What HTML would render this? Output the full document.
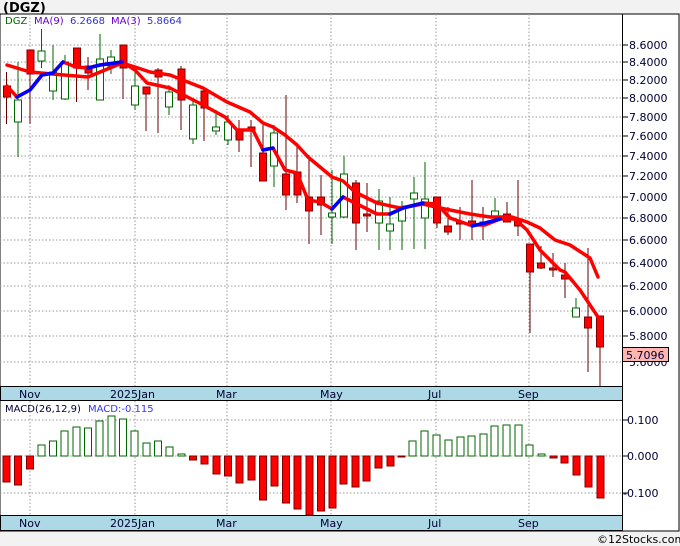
<!DOCTYPE html>
<html><head><style>
html,body{margin:0;padding:0;background:#f2f2f2;width:680px;height:546px;overflow:hidden}
svg{display:block;font-family:"DejaVu Sans","Liberation Sans",sans-serif}
</style></head><body>
<svg width="680" height="546" viewBox="0 0 680 546" xmlns="http://www.w3.org/2000/svg">
<rect x="0" y="0" width="680" height="546" fill="#f2f2f2"/>
<text x="3" y="12" font-size="13" font-weight="bold" fill="#000">(DGZ)</text>
<rect x="0" y="14" width="679" height="517" fill="#fff" stroke="#000" stroke-width="1"/>
<line x1="622.5" y1="14" x2="622.5" y2="531" stroke="#000"/>
<g stroke="#999" stroke-dasharray="1.5,2" stroke-width="1">
<line x1="0" x2="622" y1="45" y2="45"/><line x1="0" x2="622" y1="62" y2="62"/><line x1="0" x2="622" y1="80" y2="80"/><line x1="0" x2="622" y1="98" y2="98"/><line x1="0" x2="622" y1="117" y2="117"/><line x1="0" x2="622" y1="136" y2="136"/><line x1="0" x2="622" y1="156" y2="156"/><line x1="0" x2="622" y1="176" y2="176"/><line x1="0" x2="622" y1="197" y2="197"/><line x1="0" x2="622" y1="218" y2="218"/><line x1="0" x2="622" y1="240" y2="240"/><line x1="0" x2="622" y1="263" y2="263"/><line x1="0" x2="622" y1="286" y2="286"/><line x1="0" x2="622" y1="311" y2="311"/><line x1="0" x2="622" y1="336" y2="336"/><line x1="0" x2="622" y1="362" y2="362"/>
<line x1="0" x2="622" y1="420" y2="420"/><line x1="0" x2="622" y1="456" y2="456"/><line x1="0" x2="622" y1="493" y2="493"/>
<line x1="30" x2="30" y1="14" y2="386"/><line x1="135" x2="135" y1="14" y2="386"/><line x1="227" x2="227" y1="14" y2="386"/><line x1="331" x2="331" y1="14" y2="386"/><line x1="436" x2="436" y1="14" y2="386"/><line x1="529" x2="529" y1="14" y2="386"/>
<line x1="30" x2="30" y1="401" y2="515"/><line x1="135" x2="135" y1="401" y2="515"/><line x1="227" x2="227" y1="401" y2="515"/><line x1="331" x2="331" y1="401" y2="515"/><line x1="436" x2="436" y1="401" y2="515"/><line x1="529" x2="529" y1="401" y2="515"/>
</g>
<g font-size="11" fill="#000033">
<text x="629" y="49">8.6000</text><text x="629" y="66">8.4000</text><text x="629" y="84">8.2000</text><text x="629" y="102">8.0000</text><text x="629" y="121">7.8000</text><text x="629" y="140">7.6000</text><text x="629" y="160">7.4000</text><text x="629" y="180">7.2000</text><text x="629" y="201">7.0000</text><text x="629" y="222">6.8000</text><text x="629" y="244">6.6000</text><text x="629" y="267">6.4000</text><text x="629" y="290">6.2000</text><text x="629" y="315">6.0000</text><text x="629" y="340">5.8000</text><text x="629" y="366">5.6000</text>
<text x="627" y="424">0.100</text><text x="627" y="460">0.000</text><text x="623" y="497">-0.100</text>
</g>
<g stroke="#000"><line x1="622" x2="628" y1="45" y2="45"/><line x1="622" x2="628" y1="62" y2="62"/><line x1="622" x2="628" y1="80" y2="80"/><line x1="622" x2="628" y1="98" y2="98"/><line x1="622" x2="628" y1="117" y2="117"/><line x1="622" x2="628" y1="136" y2="136"/><line x1="622" x2="628" y1="156" y2="156"/><line x1="622" x2="628" y1="176" y2="176"/><line x1="622" x2="628" y1="197" y2="197"/><line x1="622" x2="628" y1="218" y2="218"/><line x1="622" x2="628" y1="240" y2="240"/><line x1="622" x2="628" y1="263" y2="263"/><line x1="622" x2="628" y1="286" y2="286"/><line x1="622" x2="628" y1="311" y2="311"/><line x1="622" x2="628" y1="336" y2="336"/><line x1="622" x2="628" y1="420" y2="420"/><line x1="622" x2="628" y1="456" y2="456"/><line x1="622" x2="628" y1="493" y2="493"/></g>
<rect x="622.5" y="347.5" width="46" height="14" fill="#ffb6b0" stroke="#000"/>
<text x="626" y="359" font-size="11" fill="#000033">5.7096</text>
<!-- candles -->
<g stroke-width="1">
<g stroke="#660000">
<line x1="6.5" x2="6.5" y1="72" y2="124"/><line x1="30" x2="30" y1="50" y2="124"/><line x1="76.5" x2="76.5" y1="48" y2="102"/><line x1="88" x2="88" y1="57" y2="90"/><line x1="123" x2="123" y1="45" y2="99"/><line x1="146" x2="146" y1="87" y2="131"/><line x1="158" x2="158" y1="68" y2="133"/><line x1="181" x2="181" y1="66" y2="130"/><line x1="204" x2="204" y1="88" y2="141"/><line x1="239" x2="239" y1="120" y2="152"/><line x1="251" x2="251" y1="120" y2="167"/><line x1="263" x2="263" y1="125" y2="181"/><line x1="286" x2="286" y1="95" y2="210"/><line x1="297" x2="297" y1="143" y2="203"/><line x1="309" x2="309" y1="155" y2="244"/><line x1="321" x2="321" y1="175" y2="235"/><line x1="356" x2="356" y1="180" y2="250"/><line x1="367" x2="367" y1="183" y2="232"/><line x1="437" x2="437" y1="197" y2="228"/><line x1="448" x2="448" y1="207" y2="235"/><line x1="460" x2="460" y1="207" y2="240"/><line x1="472" x2="472" y1="180" y2="240"/><line x1="483" x2="483" y1="207" y2="240"/><line x1="507" x2="507" y1="202" y2="219"/><line x1="518" x2="518" y1="180" y2="236"/><line x1="530" x2="530" y1="244" y2="333"/><line x1="541" x2="541" y1="246" y2="269"/><line x1="553" x2="553" y1="253" y2="277"/><line x1="565" x2="565" y1="263" y2="298"/><line x1="588" x2="588" y1="248" y2="372"/><line x1="600" x2="600" y1="316" y2="387"/>
</g>
<g fill="#ff0000" stroke="#800000">
<rect x="3.5" y="86" width="7" height="11"/><rect x="27" y="50" width="7" height="24"/><rect x="73.5" y="48" width="7" height="20"/><rect x="85" y="66" width="7" height="7"/><rect x="120" y="45" width="7" height="23"/><rect x="143" y="87" width="7" height="7"/><rect x="155" y="70" width="7" height="7"/><rect x="178" y="69" width="7" height="31"/><rect x="201" y="91" width="7" height="17"/><rect x="236" y="130" width="7" height="10"/><rect x="248" y="127" width="7" height="3"/><rect x="259.5" y="153" width="7" height="28"/><rect x="282.5" y="174" width="7" height="21"/><rect x="294" y="172" width="7" height="23"/><rect x="305.5" y="197" width="7" height="14"/><rect x="317.5" y="197" width="7" height="8"/><rect x="352.5" y="183" width="7" height="40"/><rect x="363.5" y="214" width="7" height="2"/><rect x="433.5" y="197" width="7" height="26"/><rect x="444.5" y="226" width="7" height="6"/><rect x="456.5" y="222" width="7" height="2"/><rect x="468.5" y="221" width="7" height="5"/><rect x="480" y="222" width="7" height="3"/><rect x="503.5" y="214" width="7" height="8"/><rect x="514.5" y="220" width="7" height="6"/><rect x="526.5" y="244" width="7" height="28"/><rect x="537.5" y="263" width="7" height="5"/><rect x="549.5" y="268" width="7" height="2"/><rect x="561.5" y="275" width="7" height="4"/><rect x="584.5" y="317" width="7" height="11"/><rect x="596.5" y="316" width="7" height="31"/>
</g>
<g stroke="#006600">
<line x1="18" x2="18" y1="62" y2="157"/><line x1="41.5" x2="41.5" y1="29" y2="68"/><line x1="53" x2="53" y1="45" y2="100"/><line x1="65" x2="65" y1="55" y2="100"/><line x1="100" x2="100" y1="34" y2="100"/><line x1="111" x2="111" y1="50" y2="74"/><line x1="135" x2="135" y1="68" y2="110"/><line x1="169" x2="169" y1="85" y2="115"/><line x1="193" x2="193" y1="100" y2="144"/><line x1="216" x2="216" y1="110" y2="135"/><line x1="228" x2="228" y1="115" y2="145"/><line x1="274" x2="274" y1="125" y2="187"/><line x1="332" x2="332" y1="170" y2="244"/><line x1="344" x2="344" y1="156" y2="218"/><line x1="379" x2="379" y1="189" y2="250"/><line x1="390" x2="390" y1="197" y2="250"/><line x1="402" x2="402" y1="201" y2="250"/><line x1="414" x2="414" y1="177" y2="249"/><line x1="425" x2="425" y1="162" y2="249"/><line x1="495" x2="495" y1="198" y2="219"/><line x1="576" x2="576" y1="298" y2="317"/>
</g>
<g fill="#fff" stroke="#006600">
<rect x="14.5" y="100" width="7" height="22"/><rect x="38" y="51" width="7" height="10"/><rect x="49.5" y="72" width="7" height="19"/><rect x="61.5" y="62" width="7" height="37"/><rect x="96.5" y="59" width="7" height="41"/><rect x="107.5" y="57" width="7" height="9"/><rect x="131.5" y="86" width="7" height="19"/><rect x="165.5" y="92" width="7" height="15"/><rect x="189.5" y="105" width="7" height="34"/><rect x="212.5" y="127" width="7" height="4"/><rect x="224.5" y="122" width="7" height="18"/><rect x="270.5" y="133" width="7" height="33"/><rect x="328.5" y="213" width="7" height="4"/><rect x="340.5" y="174" width="7" height="43"/><rect x="375.5" y="201" width="7" height="22"/><rect x="386.5" y="224" width="7" height="7"/><rect x="398.5" y="209" width="7" height="12"/><rect x="410.5" y="193" width="7" height="6"/><rect x="421.5" y="199" width="7" height="19"/><rect x="491.5" y="211" width="7" height="7"/><rect x="572.5" y="308" width="7" height="9"/>
</g>
</g>
<!-- MAs -->
<g fill="none" stroke-width="3.5" stroke-linejoin="round" stroke-linecap="round">
<polyline stroke="#ff0000" points="7,65 30,72 52,74 88,77 122,63 135,67 150,72 170,75 203,88 227,102 250,112 263,123 273,127 285,135 297,145 308,157 332,177 343,181 355,192 377,203 400,208 423,204 440,208 470,214 490,217 512,217 527,222 540,228 555,240 570,245 590,258 598,277"/>
<polyline stroke="#ff0000" points="7,86 17,97 30,90 42,75 53,73 63,62 76,67 88,68 100,65 122,62 135,70 147,83 170,88 203,105 225,117 237,130 253,130 263,150 273,148 285,170 297,173 308,200 320,202 332,209 343,197 355,203 377,214 390,214 403,208 423,203 437,204 450,218 470,225 485,225 500,219 515,219 527,230 540,250 560,270 565,272 580,290 590,305 600,320"/>
<polyline stroke="#0000ff" points="17,97 30,90 42,75 53,73 63,62"/>
<polyline stroke="#0000ff" points="88,68 100,65 122,62"/>
<polyline stroke="#0000ff" points="263,150 273,148"/>
<polyline stroke="#0000ff" points="332,209 343,197"/>
<polyline stroke="#0000ff" points="390,214 403,208 423,203"/>
<polyline stroke="#0000ff" points="472,226 485,223 500,219"/>
</g>
<text x="5" y="24" font-size="10" fill="#006600">DGZ</text>
<text x="34" y="24" font-size="10" fill="#6600cc">MA(9)</text>
<text x="70" y="24" font-size="10" fill="#3333cc">6.2668</text>
<text x="111" y="24" font-size="10" fill="#6600cc">MA(3)</text>
<text x="147" y="24" font-size="10" fill="#3333cc">5.8664</text>
<!-- bands -->
<rect x="0.5" y="386.5" width="622" height="14" fill="#add8e6" stroke="#000"/>
<rect x="0.5" y="515.5" width="622" height="15" fill="#add8e6" stroke="#000"/>
<g font-size="11" fill="#000033">
<text x="19" y="398">Nov</text><text x="110" y="398">2025Jan</text><text x="216" y="398">Mar</text><text x="320" y="398">May</text><text x="428" y="398">Jul</text><text x="518" y="398">Sep</text>
<text x="19" y="527">Nov</text><text x="110" y="527">2025Jan</text><text x="216" y="527">Mar</text><text x="320" y="527">May</text><text x="428" y="527">Jul</text><text x="518" y="527">Sep</text>
</g>
<text x="5" y="412" font-size="10" fill="#000033">MACD(26,12,9)</text>
<text x="88" y="412" font-size="10" fill="#3333ff">MACD:-0.115</text>
<!-- MACD histogram -->
<g fill="#fff" stroke="#006600">
<rect x="38" y="445" width="7" height="11"/><rect x="49.5" y="441" width="7" height="15"/><rect x="61" y="431" width="7" height="25"/><rect x="73" y="427" width="7" height="29"/><rect x="84.5" y="428" width="7" height="28"/><rect x="96" y="421" width="7" height="35"/><rect x="108" y="416" width="7" height="40"/><rect x="119.5" y="419" width="7" height="37"/><rect x="131" y="431" width="7" height="25"/><rect x="143" y="443" width="7" height="13"/><rect x="154.5" y="441" width="7" height="15"/><rect x="166" y="447" width="7" height="9"/><rect x="178" y="454" width="7" height="2"/>
<rect x="409" y="441" width="7" height="15"/><rect x="421" y="431" width="7" height="25"/><rect x="433" y="435" width="7" height="21"/><rect x="445" y="440" width="7" height="16"/><rect x="457" y="437" width="7" height="19"/><rect x="468" y="436" width="7" height="20"/><rect x="480" y="434" width="7" height="22"/><rect x="491" y="426" width="7" height="30"/><rect x="503" y="425" width="7" height="31"/><rect x="515" y="425" width="7" height="31"/><rect x="526" y="445" width="7" height="11"/><rect x="538" y="454" width="7" height="2"/>
</g>
<g fill="#ff0000" stroke="#800000">
<rect x="3" y="456" width="7" height="26"/><rect x="14.5" y="456" width="7" height="29"/><rect x="26.5" y="456" width="7" height="13"/>
<rect x="189.5" y="456" width="7" height="4"/><rect x="201" y="456" width="7" height="8"/><rect x="213" y="456" width="7" height="18"/><rect x="224.5" y="456" width="7" height="20"/><rect x="236" y="456" width="7" height="27"/><rect x="248" y="456" width="7" height="24"/><rect x="259.5" y="456" width="7" height="44"/><rect x="271" y="456" width="7" height="30"/><rect x="282.5" y="456" width="7" height="47"/><rect x="294" y="456" width="7" height="53"/><rect x="306" y="456" width="7" height="59"/><rect x="317.5" y="456" width="7" height="55"/><rect x="329" y="456" width="7" height="52"/><rect x="340" y="456" width="7" height="28"/><rect x="352" y="456" width="7" height="31"/><rect x="363" y="456" width="7" height="25"/><rect x="375" y="456" width="7" height="12"/><rect x="387" y="456" width="7" height="10"/><rect x="398" y="456" width="7" height="1"/>
<rect x="550" y="456" width="7" height="2"/><rect x="561" y="456" width="7" height="7"/><rect x="573" y="456" width="7" height="19"/><rect x="585" y="456" width="7" height="31"/><rect x="597" y="456" width="7" height="42"/>
</g>
<rect x="0" y="531.5" width="680" height="15" fill="#f2f2f2"/>
<text x="597" y="543" font-size="11" fill="#000">©12Stocks.com</text>
</svg>
</body></html>
